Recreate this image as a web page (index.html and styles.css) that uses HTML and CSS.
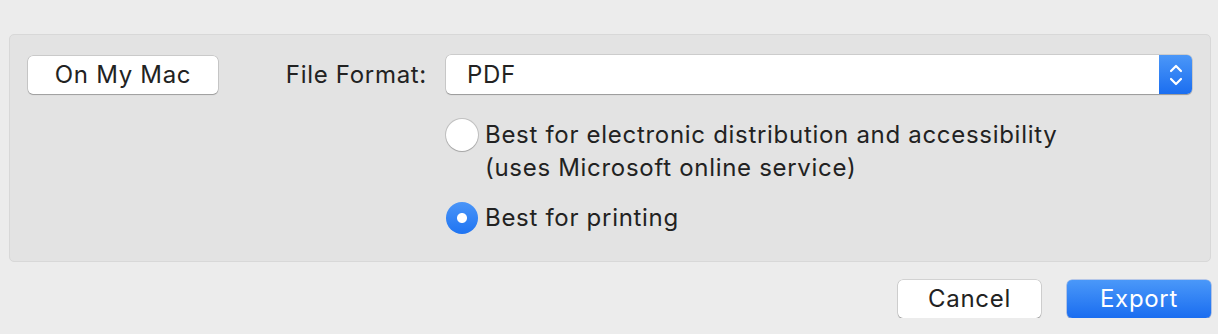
FILE: index.html
```html
<!DOCTYPE html>
<html lang="en">
<head>
<meta charset="utf-8">
<title>Export</title>
<link rel="stylesheet" href="styles.css">
</head>
<body>
<div class="dialog">
  <section class="panel">
    <div class="location">
      <button class="btn">On My Mac</button>
    </div>
    <div class="form">
      <label class="label">File Format:</label>
      <div class="select">
        <span class="select-value">PDF</span>
        <span class="stepper">
          <svg width="16" height="26" viewBox="0 0 16 26" fill="none" stroke="#fff" stroke-width="2.2" stroke-linecap="round" stroke-linejoin="round">
            <path d="M3 9 L8 4 L13 9"/>
            <path d="M3 17 L8 22 L13 17"/>
          </svg>
        </span>
      </div>
      <div class="options">
        <div class="option">
          <span class="radio"></span>
          <span class="option-text">Best for electronic distribution and accessibility<br>(uses Microsoft online service)</span>
        </div>
        <div class="option">
          <span class="radio checked"></span>
          <span class="option-text">Best for printing</span>
        </div>
      </div>
    </div>
  </section>
  <div class="actions">
    <button class="btn action">Cancel</button>
    <button class="btn action primary">Export</button>
  </div>
</div>
</body>
</html>
```

FILE: styles.css
```css
html, body {
  margin: 0;
  padding: 0;
  background: #ececec;
}
body {
  font-family: Inter, "Liberation Sans", sans-serif;
  font-size: 24px;
  letter-spacing: 0.7px;
  color: #222;
}
.dialog {
  padding: 34px 7px 0 9px;
}
.panel {
  display: flex;
  background: #e3e3e3;
  border: 1px solid #d8d8d8;
  border-radius: 5px;
  padding: 20px 18px 26px 18px;
  height: 180px;
  box-sizing: content-box;
}
.location {
  padding-top: 1px;
}
.btn {
  font-family: inherit;
  font-size: 24px;
  letter-spacing: 0.7px;
  color: #222;
  background: #fff;
  border: none;
  border-radius: 5px;
  box-shadow: 0 0 0 0.5px rgba(0,0,0,0.22), 0 1px 1px rgba(0,0,0,0.22);
  height: 38px;
  width: 190px;
  padding: 0;
  line-height: 38px;
}
.form {
  flex: 1;
  display: grid;
  grid-template-columns: 1fr 746px;
  column-gap: 19px;
  align-content: start;
}
.label {
  justify-self: end;
  line-height: 39px;
  height: 39px;
}
.select {
  display: flex;
  height: 39px;
  background: #fff;
  border-radius: 5px;
  box-shadow: 0 0 0 0.5px rgba(0,0,0,0.2), 0 1px 1px rgba(0,0,0,0.25);
  overflow: hidden;
}
.select-value {
  flex: 1;
  padding-left: 21px;
  line-height: 39px;
}
.stepper {
  width: 33px;
  display: flex;
  align-items: center;
  justify-content: center;
  background: linear-gradient(#4b97f8, #1b6ef0);
}
.options {
  grid-column: 2;
  display: flex;
  flex-direction: column;
  gap: 17px;
  padding-top: 24px;
}
.option {
  display: flex;
  align-items: flex-start;
  gap: 7px;
  line-height: 33px;
}
.radio {
  flex: none;
  width: 32px;
  height: 32px;
  box-sizing: border-box;
  border-radius: 50%;
  background: #fff;
  box-shadow: 0 0 0 1px rgba(0,0,0,0.15), 0 1px 1px rgba(0,0,0,0.15);
  margin-top: 1px;
}
.radio.checked {
  background: radial-gradient(circle, #fff 0 4.5px, transparent 5.5px), linear-gradient(#4a95f8, #1f74f2);
  box-shadow: none;
}
.actions {
  display: flex;
  justify-content: flex-end;
  gap: 26px;
  padding: 18px 0 0 0;
}
.action {
  width: 143px;
}
.primary {
  width: 144px;
  color: #fff;
  background: linear-gradient(#4a98f9, #1a6df0);
  box-shadow: 0 0 0 0.5px rgba(20,90,220,0.5), 0 1px 1px rgba(0,0,0,0.2);
}
```
